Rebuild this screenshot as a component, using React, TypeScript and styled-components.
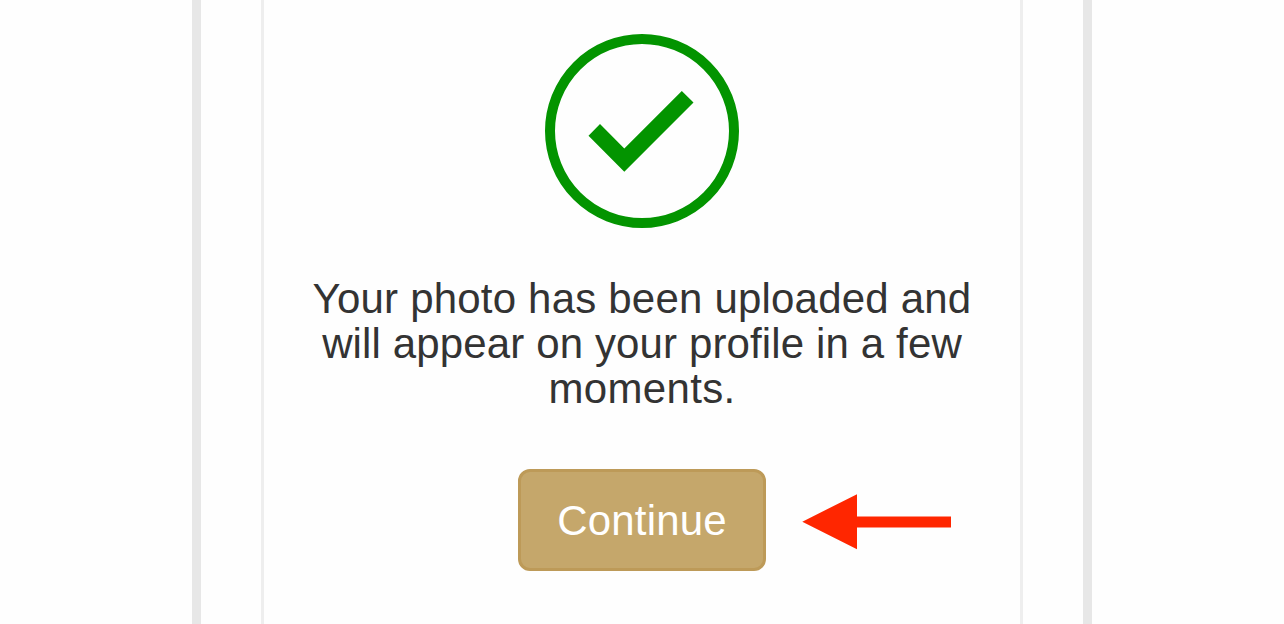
import styled, { createGlobalStyle } from "styled-components";

const GlobalStyle = createGlobalStyle`
  * {
    box-sizing: border-box;
  }
  body {
    margin: 0;
    background-color: #fefefe;
    font-family: "Liberation Sans", Helvetica, Arial, sans-serif;
  }
`;

const Page = styled.div`
  height: 624px;
  display: flex;
  justify-content: center;
  overflow: hidden;
`;

const Panel = styled.main`
  width: 900px;
  padding: 0 60px;
  border: solid #e7e7e7;
  border-width: 0 9px;
`;

const Card = styled.section`
  height: 100%;
  padding-top: 34px;
  display: flex;
  flex-direction: column;
  align-items: center;
  border: solid #eeeeee;
  border-width: 0 3px;
`;

const CheckIcon = styled.svg`
  width: 194px;
  height: 194px;
  flex-shrink: 0;
`;

const Message = styled.p`
  margin: 48px 0 58px;
  color: #333333;
  font-size: 42px;
  line-height: 45px;
  text-align: center;
`;

const Line = styled.span<{ $spacing: number }>`
  display: block;
  white-space: nowrap;
  letter-spacing: ${(props) => props.$spacing}px;
`;

const Actions = styled.div`
  position: relative;
`;

const Button = styled.button`
  display: block;
  width: 248px;
  height: 102px;
  padding: 2px 0 0;
  border: 3px solid #bd9a58;
  border-radius: 12px;
  background-color: #c5a76b;
  color: #ffffff;
  font-family: inherit;
  font-size: 42px;
  line-height: 48px;
  letter-spacing: 0.15px;
  cursor: pointer;
`;

const Arrow = styled.svg`
  position: absolute;
  top: 24px;
  left: 283px;
  width: 151px;
  height: 57px;
`;

const lines = [
  { text: "Your photo has been uploaded and", spacing: 0.2 },
  { text: "will appear on your profile in a few", spacing: 0.13 },
  { text: "moments.", spacing: 0.35 },
];

function App() {
  return (
    <Page>
      <GlobalStyle />
      <Panel>
        <Card>
          <CheckIcon viewBox="0 0 194 194" aria-hidden="true">
            <circle cx="97" cy="97" r="92" fill="none" stroke="#039400" strokeWidth="10" />
            <path
              d="M43.5 101.8 55 90.1 79.3 114.4 136.8 57 148.5 68.6 79.3 137.8Z"
              fill="#039400"
            />
          </CheckIcon>
          <Message>
            {lines.map((line) => (
              <Line key={line.text} $spacing={line.spacing}>
                {line.text}
              </Line>
            ))}
          </Message>
          <Actions>
            <Button type="button">Continue</Button>
            <Arrow viewBox="0 0 151 57" aria-hidden="true">
              <path d="M1.3 28.7 56 1.2V23.6H150V34.4H56V56.2Z" fill="#ff2600" />
            </Arrow>
          </Actions>
        </Card>
      </Panel>
    </Page>
  );
}

export default App;
